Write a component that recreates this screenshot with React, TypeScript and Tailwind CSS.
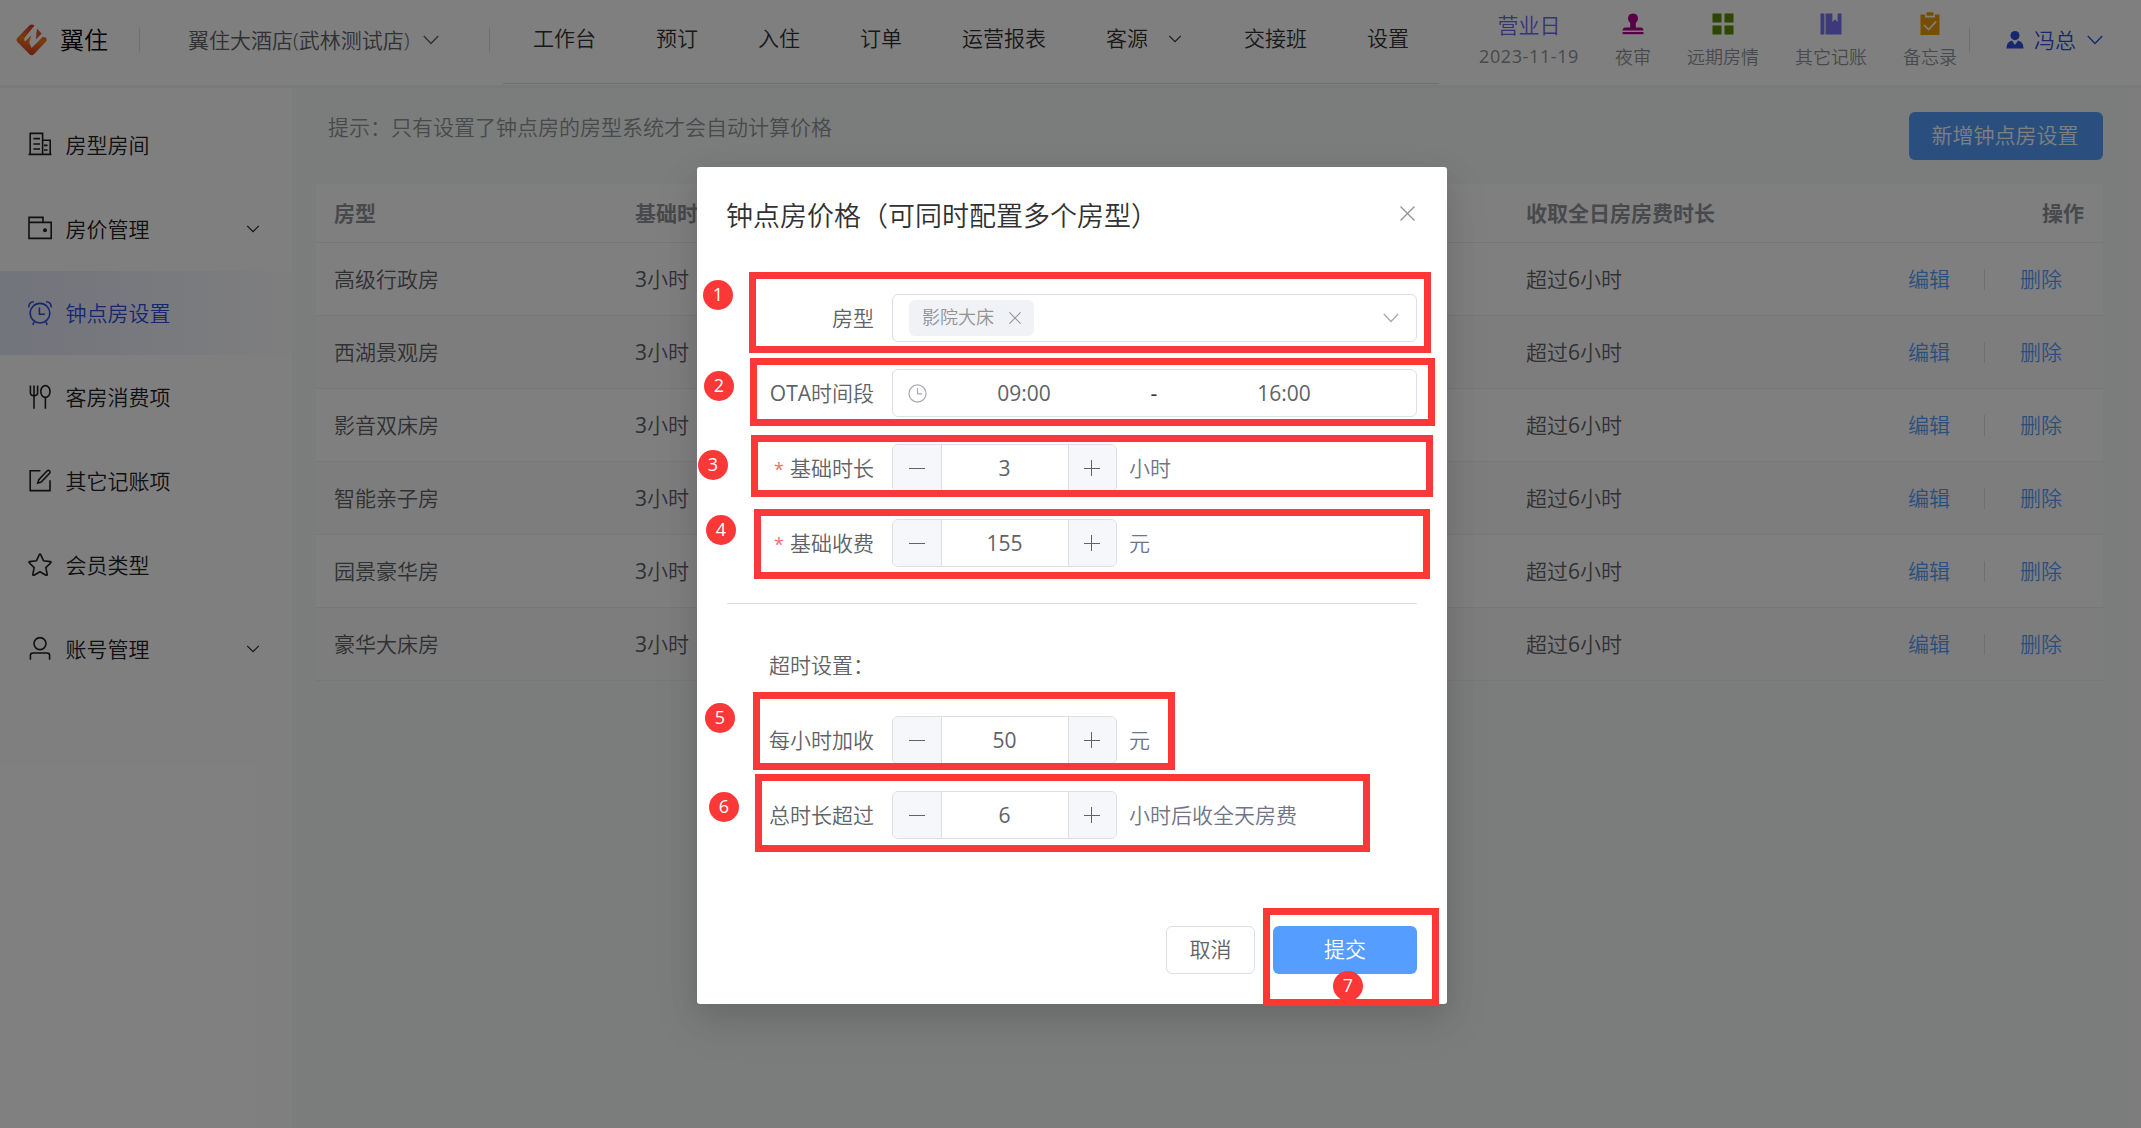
import React, { useState } from 'react';

const rooms = ['高级行政房', '西湖景观房', '影音双床房', '智能亲子房', '园景豪华房', '豪华大床房'];

const navItems = [
  { label: '工作台' },
  { label: '预订' },
  { label: '入住' },
  { label: '订单' },
  { label: '运营报表' },
  { label: '客源', hasChildren: true },
  { label: '交接班' },
  { label: '设置' },
];

const steps = [
  { id: 1, dot: 'left-[703px] top-[280px]', box: 'left-[749px] top-[272px] w-[682px] h-[81px]' },
  { id: 2, dot: 'left-[704px] top-[371px]', box: 'left-[750px] top-[358px] w-[685px] h-[68px]' },
  { id: 3, dot: 'left-[698px] top-[450px]', box: 'left-[751px] top-[435px] w-[682px] h-[62px]' },
  { id: 4, dot: 'left-[706px] top-[515px]', box: 'left-[754px] top-[509px] w-[676px] h-[70px]' },
  { id: 5, dot: 'left-[705px] top-[703px]', box: 'left-[753px] top-[692px] w-[422px] h-[78px]' },
  { id: 6, dot: 'left-[709px] top-[792px]', box: 'left-[755px] top-[774px] w-[615px] h-[78px]' },
  { id: 7, dot: 'left-[1333px] top-[971px]', box: 'left-[1263px] top-[908px] w-[176px] h-[98px]' },
];

function Chevron({ className }: { className?: string }) {
  return (
    <svg viewBox="0 0 16 10" fill="none" stroke="currentColor" strokeWidth="1.4" className={className}>
      <path d="M0.8 1 L8 8.4 L15.2 1" />
    </svg>
  );
}

function Logo() {
  return (
    <svg viewBox="0 0 32 32" className="w-8 h-8">
      <defs>
        <linearGradient id="logo" x1="0.6" y1="0" x2="0.4" y2="1">
          <stop offset="0" stopColor="#e0303a" />
          <stop offset="0.5" stopColor="#f07a1c" />
          <stop offset="1" stopColor="#d4362a" />
        </linearGradient>
      </defs>
      <path
        fill="url(#logo)"
        d="M13.6 1.2 Q15.8 -0.4 18.6 1.6 L9 13.2 Q7.4 15.6 9 17.6 L15.2 11.6 L13.2 18.4 L15.6 24 L26.6 13 L29.6 13.6 Q31.6 15.6 29.8 17.8 L18 30.2 Q15.8 32.2 13.6 30.2 L1.4 18 Q-0.4 16 1.4 13.8 Z"
      />
      <path fill="#e4572b" d="M21.2 4.8 L25.6 9.4 L20 15.6 L20.4 9 Z" />
    </svg>
  );
}

function MenuIcon({ name }: { name: string }) {
  const paths: Record<string, React.ReactNode> = {
    building: (
      <>
        <path d="M0.5 21.4H23.5M2.2 21.2V0.4H14.6V21.2M14.6 7.2H22.2V21.2" />
        <path d="M5.4 5.6H12M5.4 11H12M5.4 16H12M16 12.4H19.6M16 17H19.6" />
      </>
    ),
    wallet: (
      <>
        <path d="M1 5.4H23.2V21.4H1ZM1 5.4V0.4H15V5.4" />
        <circle cx="17" cy="13.2" r="1.2" fill="currentColor" />
      </>
    ),
    alarm: (
      <>
        <circle cx="12" cy="12.2" r="9.8" />
        <path d="M11.4 6.6V13.2H16.8M6 21.2L4.8 23.8M18 21.2L19.2 23.8M0.8 6.4Q0.6 1 6 0.8M23.2 6.4Q23.4 1 18 0.8" />
      </>
    ),
    food: (
      <>
        <path d="M2.4 0.6V7.8Q2.4 10.6 6 10.6Q9.6 10.6 9.6 7.8V0.6M6 0.6V23.8M17.4 12.4V23.8" />
        <ellipse cx="17.4" cy="6.5" rx="4.6" ry="5.9" />
      </>
    ),
    edit: (
      <>
        <path d="M12.4 1.8H2.2V21.6H22V11.2" />
        <path d="M19.2 1.8Q20.6 0.8 21.6 2Q22.6 3.2 21.6 4.2L13.2 13L9.8 14L10.8 10.6Z" />
      </>
    ),
    star: (
      <path
        strokeLinejoin="round"
        d="M12 1Q12.4 1 12.8 1.8L15.6 7.8L22.4 8.6Q23.6 9 22.6 10L17.8 14.6L19.2 21.4Q19.2 22.6 18 22.2L12 18.8L6 22.2Q4.8 22.6 4.8 21.4L6.2 14.6L1.4 10Q0.4 9 1.6 8.6L8.4 7.8L11.2 1.8Q11.6 1 12 1Z"
      />
    ),
    user: (
      <>
        <circle cx="12" cy="6.6" r="6" />
        <path d="M2.4 22.8V18.4Q2.4 16 5 16H19Q21.6 16 21.6 18.4V22.8" />
      </>
    ),
  };
  return (
    <svg viewBox="0 0 24 24" fill="none" stroke="currentColor" strokeWidth="1.6" className="w-6 h-6 overflow-visible">
      {paths[name]}
    </svg>
  );
}

const sideItems = [
  { label: '房型房间', icon: 'building' },
  { label: '房价管理', icon: 'wallet', hasChildren: true },
  { label: '钟点房设置', icon: 'alarm', active: true },
  { label: '客房消费项', icon: 'food' },
  { label: '其它记账项', icon: 'edit' },
  { label: '会员类型', icon: 'star' },
  { label: '账号管理', icon: 'user', hasChildren: true },
];

const shortcuts = [
  {
    label: '夜审',
    icon: (
      <svg viewBox="0 0 22 22" fill="#b4008c" className="w-[22px] h-[22px]">
        <path d="M11 0.4Q16 0.6 16 5.4Q15.8 8.4 13.8 10V14.4H19.4Q21.5 15 21.5 17.6H0.5Q0.6 15 2.6 14.4H8.2V10Q6.2 8.4 6 5.4Q6 0.6 11 0.4Z" />
        <path d="M0.5 19H21.5V21.2H0.5Z" />
      </svg>
    ),
  },
  {
    label: '远期房情',
    icon: (
      <svg viewBox="0 0 22 22" fill="#5a8c00" className="w-[22px] h-[22px]">
        <path d="M0.5 0.5H9.5V9.5H0.5ZM12.5 0.5H21.5V9.5H12.5ZM0.5 12.5H9.5V21.5H0.5ZM12.5 12.5H21.5V21.5H12.5Z" />
      </svg>
    ),
  },
  {
    label: '其它记账',
    icon: (
      <svg viewBox="0 0 22 22" fill="#7874f6" className="w-[22px] h-[22px]">
        <path d="M0.5 0.5H4.4V21.5H0.5ZM5.6 0.5H12.4V9L15 6.2L17.6 9V0.5H21.5V21.5H5.6Z" />
      </svg>
    ),
  },
  {
    label: '备忘录',
    icon: (
      <svg viewBox="0 0 22 22" className="w-[22px] h-[22px] overflow-visible">
        <path fill="#ef9c00" d="M1.5 1.6H6V4.4H16V1.6H20.5V22H1.5ZM7.5 -0.8H14.5V2.8H7.5Z" />
        <path fill="none" stroke="#fff" strokeWidth="1.6" d="M5 12L9.6 16.6L17.2 8.4" />
      </svg>
    ),
  },
];

function Header() {
  return (
    <header className="flex items-start h-[88px] bg-white border-b-[3px] border-[#f1f3f3]">
      <div className="flex items-center h-20 pl-4">
        <Logo />
        <span className="ml-[12px] text-2xl leading-9 text-black">翼住</span>
        <div className="ml-[31px] w-px h-6 bg-[#dcdfe6]" />
        <div className="flex items-center ml-[48px] text-[#606266]">
          <span className="w-[225px] whitespace-nowrap">翼住大酒店(武林测试店)</span>
          <Chevron className="w-4 h-2.5 ml-[10px]" />
        </div>
        <div className="ml-[50px] w-px h-6 bg-[#dcdfe6]" />
      </div>
      <nav className="flex h-[84px] ml-[13px] border-b border-[#dcdfe6] text-[#303133]">
        {navItems.map((item) => (
          <a key={item.label} className="flex items-center h-[76px] px-[30px] whitespace-nowrap">
            {item.label}
            {item.hasChildren && <Chevron className="w-3.5 h-2 mt-px ml-[20px] mr-[2px]" />}
          </a>
        ))}
      </nav>
      <div className="flex ml-[40px] h-20 text-lg leading-[26px] text-[#909399]">
        <div className="flex flex-col items-center w-[100px] pt-[11px]">
          <span className="text-[21px] leading-7 text-[#6a67f3]">营业日</span>
          <span className="mt-1 font-normal tracking-[0.6px] whitespace-nowrap">2023-11-19</span>
        </div>
        {shortcuts.map((s) => (
          <div key={s.label} className="flex flex-col items-center ml-9 pt-[13px] whitespace-nowrap">
            {s.icon}
            <span className="mt-[9px]">{s.label}</span>
          </div>
        ))}
      </div>
      <div className="flex items-center h-20 ml-[12px] text-[21px] text-[#2c4fe0]">
        <div className="w-px h-6 bg-[#dcdfe6]" />
        <svg viewBox="0 0 18 18" fill="currentColor" className="w-[18px] h-[18px] ml-9">
          <ellipse cx="9" cy="4.6" rx="4.5" ry="4.6" />
          <path d="M0.4 17.6Q0.6 10.6 6 9.6L9 14L12 9.6Q17.4 10.6 17.6 17.6Z" />
        </svg>
        <span className="ml-2.5">冯总</span>
        <Chevron className="w-4 h-2.5 ml-[11px]" />
      </div>
    </header>
  );
}

function Sidebar() {
  return (
    <aside className="w-[292px] shrink-0 bg-white pt-[15px]">
      {sideItems.map((item) => (
        <div
          key={item.label}
          className={`flex items-center h-[84px] pl-[28px] pr-[32px] ${
            item.active ? 'bg-linear-to-r from-[#e6e9f8] to-[#fdfdff] text-[#2c4fe0]' : 'text-[#1f2023]'
          }`}
        >
          <MenuIcon name={item.icon} />
          <span className="ml-[13.5px]">{item.label}</span>
          {item.hasChildren && <Chevron className="w-3.5 h-2 ml-auto" />}
        </div>
      ))}
    </aside>
  );
}

function RoomTable() {
  return (
    <div className="mt-6 bg-white text-[#606266]">
      <div className="flex items-center h-[59px] pl-[18px] pr-[19px] border-b border-[#ebeef5] font-bold text-[#909399]">
        <span className="w-[301px]">房型</span>
        <span className="w-[891px]">基础时长</span>
        <span>收取全日房房费时长</span>
        <span className="ml-auto">操作</span>
      </div>
      {rooms.map((room, i) => (
        <div
          key={room}
          className={`flex items-center h-[73px] pl-[18px] pr-[41px] border-b border-[#ebeef5] ${i % 2 ? 'bg-[#fafafa]' : ''}`}
        >
          <span className="w-[301px]">{room}</span>
          <span className="w-[891px]">
            <span className="font-normal">3</span>小时
          </span>
          <span>
            超过<span className="font-normal">6</span>小时
          </span>
          <div className="flex items-center ml-auto text-[#559eff]">
            <a>编辑</a>
            <div className="w-px h-[21px] ml-[34px] mr-[35px] bg-[#dcdfe6]" />
            <a>删除</a>
          </div>
        </div>
      ))}
    </div>
  );
}

interface FieldProps {
  label: React.ReactNode;
  required?: boolean;
  className?: string;
  children: React.ReactNode;
}

function Field({ label, required, className = '', children }: FieldProps) {
  return (
    <div className={`flex items-center h-12 ${className}`}>
      <label className="w-[147px] mr-[18px] text-right whitespace-nowrap">
        {required && <span className="mr-1.5 text-lg font-normal text-[#f56c6c]">*</span>}
        {label}
      </label>
      {children}
    </div>
  );
}

function NumberInput({ initial, unit }: { initial: number; unit: string }) {
  const [value, setValue] = useState(initial);

  return (
    <>
      <div className="flex w-[225px] h-12 border border-[#dcdfe6] rounded-md overflow-hidden">
        <button
          onClick={() => setValue(value - 1)}
          className="flex items-center justify-center w-[49px] bg-[#f5f7fa] border-r border-[#dcdfe6]"
        >
          <div className="w-4 h-px bg-[#606266]" />
        </button>
        <span className="flex-1 pr-px leading-[46px] text-center font-normal">{value}</span>
        <button
          onClick={() => setValue(value + 1)}
          className="flex items-center justify-center w-12 pr-px bg-[#f5f7fa] border-l border-[#dcdfe6]"
        >
          <svg viewBox="0 0 16 16" stroke="#606266" strokeWidth="1" className="w-4 h-4">
            <path d="M0 8.5H16M7.5 0V16" />
          </svg>
        </button>
      </div>
      <span className="ml-3 text-[#6f7488]">{unit}</span>
    </>
  );
}

function Cross({ className }: { className?: string }) {
  return (
    <svg viewBox="0 0 14 14" fill="none" stroke="currentColor" strokeWidth="1.2" className={className}>
      <path d="M0.5 0.5L13.5 13.5M13.5 0.5L0.5 13.5" />
    </svg>
  );
}

function PriceDialog() {
  return (
    <div className="absolute left-[697px] top-[167px] w-[750px] h-[837px] px-[30px] bg-white rounded-[3px] text-[#606266] shadow-[0_18px_48px_6px_rgba(0,0,0,0.06),0_12px_30px_rgba(0,0,0,0.1)]">
      <div className="flex justify-between h-[127px] pt-[29px]">
        <h2 className="-ml-px text-[27px] leading-10 text-[#303133]">钟点房价格（可同时配置多个房型）</h2>
        <Cross className="w-[15px] h-[15px] mt-[10px] mr-[2px] text-[#909399]" />
      </div>

      <Field label="房型">
        <div className="flex items-center w-[525px] h-12 pl-4 pr-[17px] border border-[#dcdfe6] rounded-md">
          <div className="flex items-center h-9 px-[13px] rounded-md bg-[#f0f2f5] text-lg text-[#909399]">
            <span className="-mt-0.5">影院大床</span>
            <Cross className="w-3 h-3 ml-[15px]" />
          </div>
          <Chevron className="w-4 h-2.5 ml-auto text-[#a8abb2]" />
        </div>
      </Field>

      <Field
        label={
          <>
            <span className="font-normal">OTA</span>时间段
          </>
        }
        className="mt-[27px]"
      >
        <div className="flex items-center w-[525px] h-12 pl-[15px] border border-[#dcdfe6] rounded-md font-normal">
          <svg viewBox="0 0 20 20" fill="none" stroke="#a8abb2" strokeWidth="1.3" className="w-[19px] h-[19px]">
            <circle cx="10" cy="10" r="9" />
            <path d="M10 4.6V10.4H15" />
          </svg>
          <span className="w-[194px] text-center">09:00</span>
          <span className="w-[66px] text-center text-[#303133]">-</span>
          <span className="w-[194px] text-center">16:00</span>
        </div>
      </Field>

      <Field label="基础时长" required className="mt-[27px]">
        <NumberInput initial={3} unit="小时" />
      </Field>
      <Field label="基础收费" required className="mt-[27px]">
        <NumberInput initial={155} unit="元" />
      </Field>

      <div className="mt-9 h-px bg-[#dcdfe6]" />
      <p className="mt-[46px] pl-[42px] leading-[30px]">超时设置：</p>

      <Field label="每小时加收" className="mt-[36px]">
        <NumberInput initial={50} unit="元" />
      </Field>
      <Field label="总时长超过" className="mt-[27px]">
        <NumberInput initial={6} unit="小时后收全天房费" />
      </Field>

      <div className="flex justify-end gap-[18px] mt-[87px]">
        <button className="w-[89px] h-12 pb-0.5 border border-[#dcdfe6] rounded-md">取消</button>
        <button className="w-36 h-12 pb-0.5 rounded-md bg-[#559eff] text-white">提交</button>
      </div>
    </div>
  );
}

export default function App() {
  return (
    <div className="relative w-[2141px] h-[1128px] overflow-hidden bg-white font-['Open_Sans','Noto_Sans_CJK_SC',sans-serif] font-[350] text-[21px] leading-[30px]">
      <Header />
      <div className="flex h-[1040px]">
        <Sidebar />
        <main className="w-[1835px] pl-6 pr-6 pt-6 bg-[#f6faf8]">
          <div className="flex justify-between h-12">
            <p className="pl-3 text-[#909399]">提示：只有设置了钟点房的房型系统才会自动计算价格</p>
            <button className="w-[194px] h-12 pr-0.5 pb-0.5 rounded-md bg-[#559eff] text-white">新增钟点房设置</button>
          </div>
          <RoomTable />
        </main>
        <div className="flex-1 bg-[#fafafa]" />
      </div>

      {/* Mask and dialog */}
      <div className="absolute inset-0 bg-black/50" />
      <PriceDialog />

      {/* Numbered step markers */}
      {steps.map((step) => (
        <React.Fragment key={step.id}>
          <div
            className={`absolute w-[30px] h-[30px] rounded-full bg-[#fb3838] text-white text-lg leading-[28px] text-center font-normal ${step.dot}`}
          >
            {step.id}
          </div>
          <div className={`absolute border-[7px] border-[#fb3838] ${step.box}`} />
        </React.Fragment>
      ))}
    </div>
  );
}
